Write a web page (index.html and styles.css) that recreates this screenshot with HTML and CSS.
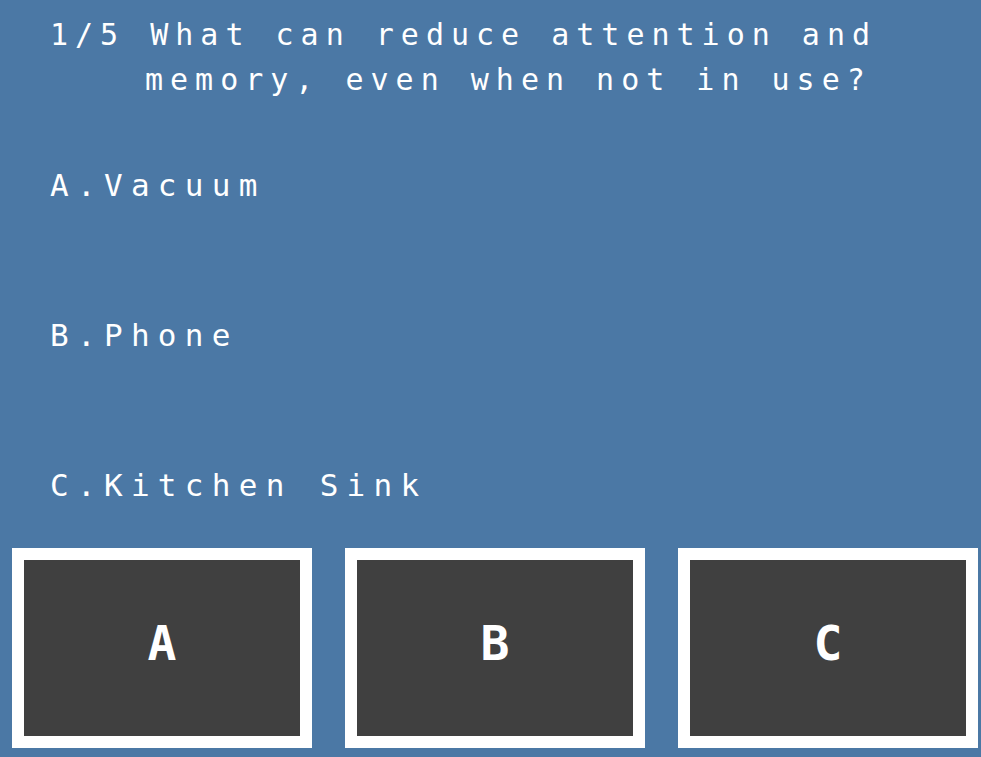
FILE: index.html
```html
<!DOCTYPE html>
<html lang="en">
<head>
<meta charset="utf-8">
<title>Quiz</title>
<link rel="stylesheet" href="styles.css">
</head>
<body>
<main class="quiz">
  <h1 class="question">
    <span class="q-line">1/5 What can reduce attention and</span>
    <span class="q-line q-indent">memory, even when not in use?</span>
  </h1>
  <ul class="options">
    <li class="option">A.Vacuum</li>
    <li class="option">B.Phone</li>
    <li class="option">C.Kitchen Sink</li>
  </ul>
  <div class="answers">
    <button class="answer">A</button>
    <button class="answer">B</button>
    <button class="answer">C</button>
  </div>
</main>
</body>
</html>
```

FILE: styles.css
```css
* { box-sizing: border-box; }

html, body {
  margin: 0;
  padding: 0;
  background: #4b78a5;
  width: 981px;
  height: 757px;
  overflow: hidden;
}

.quiz {
  display: flex;
  flex-direction: column;
  color: #ffffff;
  font-family: "DejaVu Sans Mono", "Liberation Mono", monospace;
}

.question {
  margin: 0;
  padding: 12px 0 0 50px;
  font-size: 30px;
  font-weight: normal;
  line-height: 45px;
  letter-spacing: 7px;
}

.q-line {
  display: block;
  white-space: pre;
}

.q-indent {
  padding-left: 95px;
}

.options {
  list-style: none;
  margin: 63px 0 0 0;
  padding: 0 0 0 50px;
  display: flex;
  flex-direction: column;
  gap: 110px;
}

.option {
  font-size: 31px;
  line-height: 40px;
  letter-spacing: 8.3px;
  white-space: pre;
}

.answers {
  display: flex;
  gap: 33px;
  padding-left: 12px;
  margin-top: 43px;
}

.answer {
  width: 300px;
  height: 200px;
  border: 12px solid #ffffff;
  background: #404040;
  color: #ffffff;
  font-family: "DejaVu Sans Mono", "Liberation Mono", monospace;
  font-size: 48px;
  font-weight: bold;
  padding: 0 0 10px 0;
  display: flex;
  align-items: center;
  justify-content: center;
  border-radius: 0;
}
```
